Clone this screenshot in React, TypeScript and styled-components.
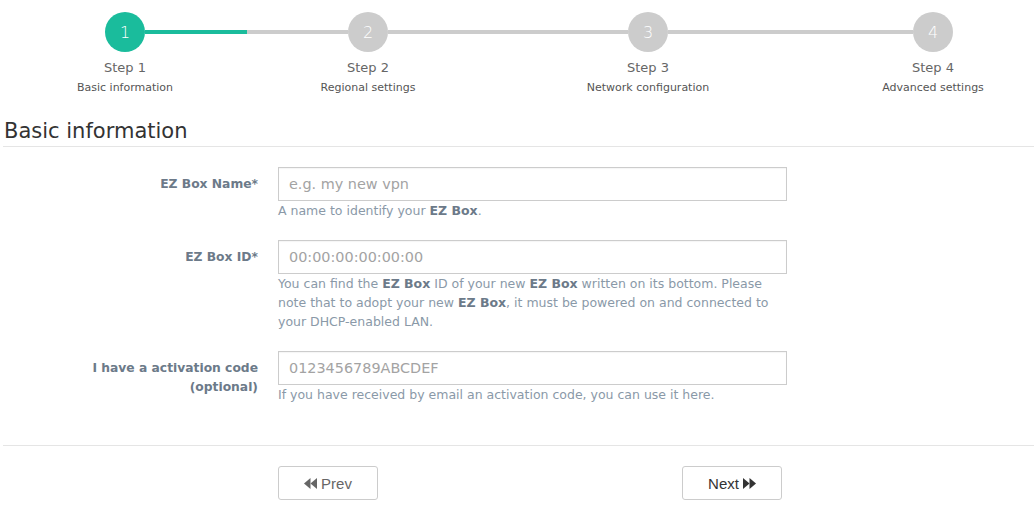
import React from 'react'
import styled, { createGlobalStyle } from 'styled-components'

const GlobalStyle = createGlobalStyle`
html, body {
  margin: 0;
  padding: 0;
  background: #fff;
}
body {
  font-family: "DejaVu Sans", "Open Sans", sans-serif;
  color: #333;
}
`

const Page = styled.div`
width: 1034px;
padding: 0 0 0 3px;
box-sizing: border-box;
`

const Stepper = styled.div`
display: flex;
align-items: flex-start;
padding: 12px 81px 0 102px;
height: 114px;
box-sizing: border-box;
`

const Step = styled.div`
width: 40px;
display: flex;
flex-direction: column;
align-items: center;
flex: none;
`

const Circle = styled.div<{ $active?: boolean }>`
width: 40px;
height: 40px;
border-radius: 50%;
background: ${p => (p.$active ? '#1abc9c' : '#cccccc')};
color: #fff;
display: flex;
align-items: center;
justify-content: center;
font-size: 16px;
font-weight: 300;
`

const StepTitle = styled.div`
margin-top: 8px;
font-size: 13px;
color: #666;
white-space: nowrap;
`

const StepDesc = styled.div`
margin-top: 6px;
font-size: 11px;
color: #555;
white-space: nowrap;
`

const Connector = styled.div<{ $grow: number; $done?: number }>`
flex: ${p => p.$grow} 1 0;
height: 4px;
margin-top: 18px;
background: ${p =>
    p.$done
      ? `linear-gradient(to right, #1abc9c ${p.$done}%, #cccccc ${p.$done}%)`
      : '#cccccc'};
`

const Heading = styled.h2`
margin: 0;
padding: 6px 0 4px 1px;
font-size: 21px;
line-height: 22px;
font-weight: 400;
color: #333;
border-bottom: 1px solid #e5e5e5;
`

const Form = styled.form`
display: flex;
flex-direction: column;
padding-top: 20px;
`

const Row = styled.div`
display: grid;
grid-template-columns: 255px 509px;
column-gap: 20px;
margin-bottom: 20px;
`

const Label = styled.label`
text-align: right;
font-size: 12.3px;
font-weight: bold;
color: #6c7a89;
line-height: 19px;
padding-top: 8px;
`

const Field = styled.div`
display: flex;
flex-direction: column;
`

const Input = styled.input`
height: 34px;
box-sizing: border-box;
border: 1px solid #cccccc;
border-radius: 0;
padding: 0 10px;
font-family: inherit;
font-size: 14.4px;
color: #555;
box-shadow: inset 0 1px 1px rgba(0, 0, 0, 0.04);
&::placeholder {
  color: #a3a3a3;
}
&:focus {
  outline: none;
}
`

const Help = styled.p`
margin: 0;
font-size: 12.5px;
line-height: 19px;
color: #8a99a8;
b {
  color: #6c7a89;
}
`

const Footer = styled.div`
border-top: 1px solid #e5e5e5;
margin-top: 21px;
padding: 20px 0 0 275px;
display: flex;
gap: 304px;
`

const Button = styled.button<{ $muted?: boolean }>`
width: 100px;
height: 34px;
box-sizing: border-box;
background: #fff;
border: 1px solid #cccccc;
border-radius: 3px;
font-family: "Liberation Sans", Arial, sans-serif;
font-size: 15px;
color: ${p => (p.$muted ? '#666' : '#333')};
display: flex;
align-items: center;
justify-content: center;
gap: 4px;
cursor: pointer;
`

const Arrows = ({ dir }: { dir: 'left' | 'right' }) => (
  <svg width="13" height="11" viewBox="0 0 13 11" fill="currentColor">
    {dir === 'left' ? (
      <>
        <path d="M0 5.5 L6.5 0 V11 Z" />
        <path d="M6.5 5.5 L13 0 V11 Z" />
      </>
    ) : (
      <>
        <path d="M0 0 L6.5 5.5 L0 11 Z" />
        <path d="M6.5 0 L13 5.5 L6.5 11 Z" />
      </>
    )}
  </svg>
)

const steps = [
  { n: 1, title: 'Step 1', desc: 'Basic information' },
  { n: 2, title: 'Step 2', desc: 'Regional settings' },
  { n: 3, title: 'Step 3', desc: 'Network configuration' },
  { n: 4, title: 'Step 4', desc: 'Advanced settings' },
]

const gaps = [203, 240, 245]

const App: React.FC = () => {
  return (
    <Page>
      <GlobalStyle />
      <Stepper>
        {steps.map((s, i) => (
          <React.Fragment key={s.n}>
            <Step>
              <Circle $active={s.n === 1}>{s.n}</Circle>
              <StepTitle>{s.title}</StepTitle>
              <StepDesc>{s.desc}</StepDesc>
            </Step>
            {i < gaps.length && <Connector $grow={gaps[i]} $done={i === 0 ? 50 : 0} />}
          </React.Fragment>
        ))}
      </Stepper>

      <Heading>Basic information</Heading>

      <Form onSubmit={e => e.preventDefault()}>
        <Row>
          <Label>EZ Box Name*</Label>
          <Field>
            <Input type="text" placeholder="e.g. my new vpn" />
            <Help>
              A name to identify your <b>EZ Box</b>.
            </Help>
          </Field>
        </Row>
        <Row>
          <Label>EZ Box ID*</Label>
          <Field>
            <Input type="text" placeholder="00:00:00:00:00:00" />
            <Help>
              You can find the <b>EZ Box</b> ID of your new <b>EZ Box</b> written on its bottom. Please
              note that to adopt your new <b>EZ Box</b>, it must be powered on and connected to
              your DHCP-enabled LAN.
            </Help>
          </Field>
        </Row>
        <Row>
          <Label>
            I have a activation code
            <br />
            (optional)
          </Label>
          <Field>
            <Input type="text" placeholder="0123456789ABCDEF" />
            <Help>If you have received by email an activation code, you can use it here.</Help>
          </Field>
        </Row>

        <Footer>
          <Button type="button" $muted>
            <Arrows dir="left" /> Prev
          </Button>
          <Button type="submit">
            Next <Arrows dir="right" />
          </Button>
        </Footer>
      </Form>
    </Page>
  )
}

export default App
